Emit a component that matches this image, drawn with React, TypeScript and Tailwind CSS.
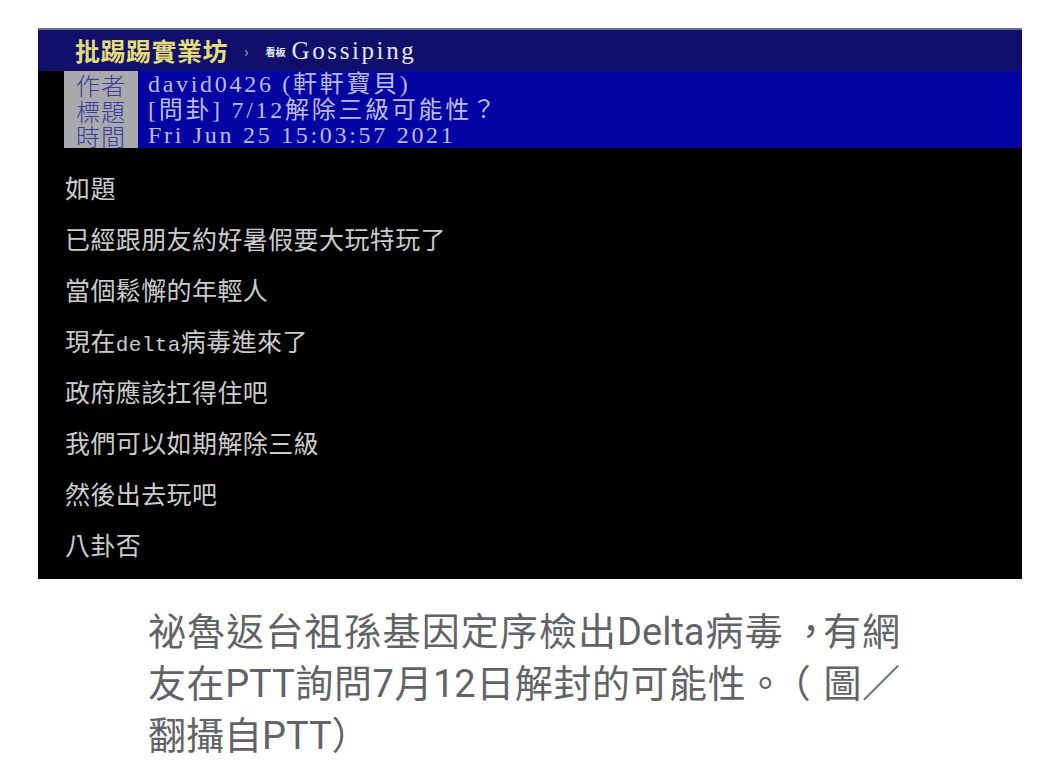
import React from "react";

const bodyLines: React.ReactNode[] = [
  "如題",
  "已經跟朋友約好暑假要大玩特玩了",
  "當個鬆懈的年輕人",
  (
    <>
      現在
      <span className="font-['Liberation_Mono',monospace] text-[21px] leading-none">delta</span>
      病毒進來了
    </>
  ),
  "政府應該扛得住吧",
  "我們可以如期解除三級",
  "然後出去玩吧",
  "八卦否",
];

export default function App() {
  return (
    <div lang="zh-Hant-TW" className="w-[1059px] h-[778px] bg-white overflow-hidden">
      <div className="pt-[28px] pl-[38px]">
        <div className="w-[984px] h-[551px] bg-black overflow-hidden">
          {/* title bar */}
          <div className="h-[43px] bg-[#10106c] border-t-2 border-[#6c6c8c] flex items-center pl-[37px] font-['Noto_Sans_CJK_TC',sans-serif]">
            <span className="text-[#e4dc78] text-[25px] font-bold leading-none tracking-[0.5px]">
              批踢踢實業坊
            </span>
            <span className="text-[#b0b0c8] text-[15px] ml-[16px] leading-none">›</span>
            <span className="text-[#e8e8f0] text-[10px] ml-[17px] mt-[3px] leading-none font-bold">看板</span>
            <span className="font-['Liberation_Serif','Noto_Sans_CJK_TC',serif] text-[#e4e4f4] text-[25px] leading-none ml-[6px] tracking-[2.6px]">
              Gossiping
            </span>
          </div>
          {/* info area */}
          <div className="h-[77px] flex bg-[#0404a4]">
            <div className="w-[26px] bg-black" />
            <div className="w-[74px] bg-[#a9a9ab] text-[#3c3ca4] text-[24px] font-light flex flex-col items-center pt-[1px] tracking-[1px] font-['Noto_Sans_CJK_TC',sans-serif]">
              <div className="h-[25.5px] leading-[25.5px]">作者</div>
              <div className="h-[25.5px] leading-[25.5px]">標題</div>
              <div className="h-[25.5px] leading-[25.5px]">時間</div>
            </div>
            <div className="pl-[10px] text-[#bcbce0] text-[24px] tracking-[2.7px] pt-[1px] whitespace-nowrap font-['Liberation_Serif','Noto_Sans_CJK_TC',serif]">
              <div className="h-[25.5px] leading-[25.5px]">david0426 (軒軒寶貝)</div>
              <div className="h-[25.5px] leading-[25.5px]">[問卦] 7/12解除三級可能性？</div>
              <div className="h-[25.5px] leading-[25.5px]">Fri Jun 25 15:03:57 2021</div>
            </div>
          </div>
          {/* body */}
          <div className="pt-[14px] pl-[27px] text-[#cbcbcb] text-[25px] tracking-[0.4px] font-['Noto_Sans_CJK_TC',sans-serif]">
            {bodyLines.map((l, i) => (
              <div key={i} className="h-[51px] leading-[51px] whitespace-nowrap">
                {l}
              </div>
            ))}
          </div>
        </div>
      </div>
      <p className="mt-[27px] ml-[148px] w-[752px] text-[38px] leading-[52px] text-[#616367] text-justify [text-spacing-trim:space-all] font-['Roboto','Noto_Sans_CJK_TC',sans-serif]">
        祕魯返台祖孫基因定序檢出Delta病毒<span className="ml-[8px] -mr-[8px]">，</span>有網友在PTT詢問7月12日解封的可能性。<span className="-ml-[12px] mr-[12px]">（</span>圖／翻攝自PTT）
      </p>
    </div>
  );
}
